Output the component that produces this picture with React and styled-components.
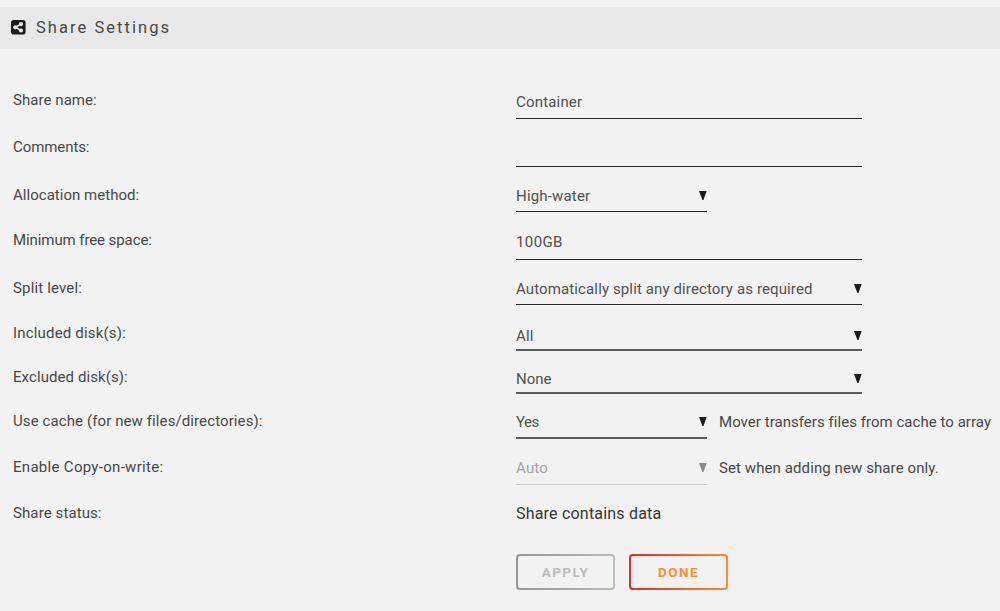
import React from "react";
import styled, { createGlobalStyle } from "styled-components";

const rows = [
  { label: "Share name:", value: "Container", height: 47, shift: 2, line: 31, tracking: 0.06 },
  { label: "Comments:", value: "", height: 48, shift: 2, line: 32, tracking: -0.08 },
  { label: "Allocation method:", value: "High-water", height: 45, shift: 1, line: 29, tracking: 0.03, select: true, narrow: true },
  { label: "Minimum free space:", value: "100GB", height: 48, shift: 2, line: 32, tracking: -0.09, valueTracking: 0.4 },
  { label: "Split level:", value: "Automatically split any directory as required", height: 45, shift: 1, line: 29, tracking: 0.16, valueTracking: 0.12, select: true },
  { label: "Included disk(s):", value: "All", height: 44, shift: 3, line: 30, tracking: 0.18, select: true, thick: true },
  { label: "Excluded disk(s):", value: "None", height: 44, shift: 2, line: 29, tracking: 0.08, valueTracking: 0, select: true, thick: true },
  { label: "Use cache (for new files/directories):", value: "Yes", height: 46, shift: 1, line: 30, tracking: 0.1, valueTracking: -0.5, select: true, narrow: true, thick: true, note: "Mover transfers files from cache to array", noteTracking: 0.04 },
  { label: "Enable Copy-on-write:", value: "Auto", height: 46, shift: 1, line: 30, tracking: 0.3, select: true, narrow: true, disabled: true, note: "Set when adding new share only.", noteTracking: 0.09 },
];

function ShareIcon() {
  return (
    <svg width="15" height="15" viewBox="0 0 15 15">
      <rect width="14.6" height="14.6" rx="2.8" fill="#1c1b1b" />
      <path d="M9.9 4.2L4.4 7.3l5.5 3.1" fill="none" stroke="#e8e8e8" strokeWidth="1.6" />
      <circle cx="10" cy="4.1" r="2.1" fill="#e8e8e8" />
      <circle cx="4.3" cy="7.3" r="2.1" fill="#e8e8e8" />
      <circle cx="10" cy="10.5" r="2.1" fill="#e8e8e8" />
    </svg>
  );
}

function App() {
  return (
    <>
      <GlobalStyle />
      <TitleBar>
        <ShareIcon />
        <Title>Share Settings</Title>
      </TitleBar>
      <Form>
        {rows.map((row) => (
          <Row key={row.label} $height={row.height}>
            <Label $tracking={row.tracking}>{row.label}</Label>
            <Field $narrow={row.narrow} $shift={row.shift} $line={row.line} $thick={row.thick} $disabled={row.disabled} $tracking={row.valueTracking}>
              <span>{row.value}</span>
              {row.select && <Arrow />}
            </Field>
            {row.note && (
              <Note $shift={row.shift} $tracking={row.noteTracking}>
                {row.note}
              </Note>
            )}
          </Row>
        ))}
        <Row $height={53}>
          <Label $tracking={0.1}>Share status:</Label>
          <Status>Share contains data</Status>
        </Row>
        <Buttons>
          <Button disabled>Apply</Button>
          <Button>Done</Button>
        </Buttons>
      </Form>
    </>
  );
}

export default App;

const GlobalStyle = createGlobalStyle`
  * {
    box-sizing: border-box;
  }

  body {
    margin: 0;
    background: #f2f2f2;
    color: #474747;
    font-family: Roboto, "Liberation Sans", sans-serif;
    font-size: 15px;
    line-height: 24px;
    overflow: hidden;
  }
`;

const TitleBar = styled.header`
  height: 42px;
  margin-top: 7px;
  padding: 0 0 1px 11px;
  display: flex;
  align-items: center;
  background: #e8e8e8;
`;

const Title = styled.h1`
  margin: 0 0 0 10px;
  font-size: 16.5px;
  font-weight: 400;
  letter-spacing: 2.05px;
`;

const Form = styled.main`
  padding-top: 39px;
`;

const Row = styled.div`
  height: ${(props) => props.$height}px;
  display: flex;
  align-items: flex-start;
  white-space: nowrap;
`;

const Label = styled.label`
  width: 516px;
  flex: none;
  padding-left: 13px;
  letter-spacing: ${(props) => props.$tracking}px;
`;

const Field = styled.div`
  width: ${(props) => (props.$narrow ? 191 : 346)}px;
  height: ${(props) => props.$line}px;
  padding-top: ${(props) => props.$shift}px;
  display: flex;
  flex: none;
  justify-content: space-between;
  letter-spacing: ${(props) => props.$tracking ?? 0.18}px;
  color: ${(props) => (props.$disabled ? "#a3a3a3" : "#505050")};
  border-bottom: ${(props) => (props.$thick ? "2px solid #5c5c5c" : "1px solid #262626")};
  ${(props) => props.$disabled && "border-bottom-color: #c8c8c8;"}
  --arrow: ${(props) => (props.$disabled ? "#8a8a8a" : "#1c1b1b")};
`;

const Arrow = styled.i`
  width: 8px;
  height: 9px;
  margin-top: 7px;
  background: var(--arrow);
  clip-path: polygon(0 0, 96% 0, 56% 100%, 42% 100%);
`;

const Note = styled.span`
  margin-left: 12px;
  padding-top: ${(props) => props.$shift}px;
  letter-spacing: ${(props) => props.$tracking}px;
`;

const Status = styled.span`
  padding-top: 1px;
  color: #363636;
  font-size: 16px;
  letter-spacing: 0.2px;
`;

const Buttons = styled.div`
  padding-left: 516px;
  display: flex;
  gap: 14px;
`;

const Button = styled.button`
  width: 99px;
  height: 36px;
  padding: 0;
  border: 2px solid transparent;
  border-radius: 4px;
  background: linear-gradient(#f2f2f2, #f2f2f2) padding-box,
    linear-gradient(90deg, #e22828, #ff8c2f) border-box;
  color: #ff8c2f;
  font-family: inherit;
  font-size: 13.5px;
  font-weight: 700;
  letter-spacing: 1.4px;
  text-transform: uppercase;

  &:disabled {
    background: linear-gradient(#f2f2f2, #f2f2f2) padding-box,
      linear-gradient(90deg, #959595, #bcbcbc) border-box;
    color: #bcbcbc;
  }
`;
